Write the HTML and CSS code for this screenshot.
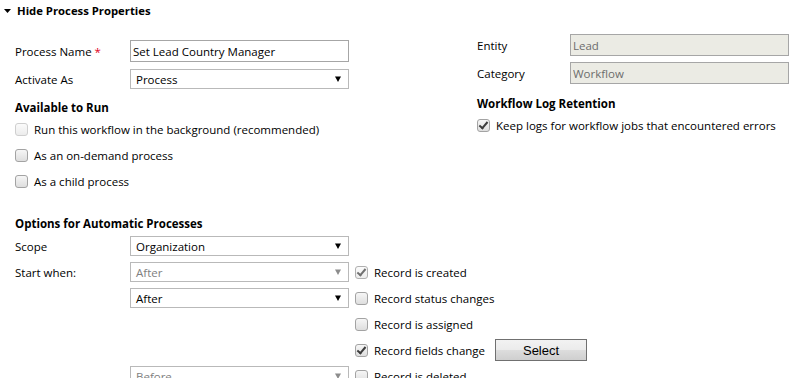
FILE: index.html
```html
<!DOCTYPE html>
<html lang="en">
<head>
    <meta charset="UTF-8">
    <meta name="viewport" content="width=device-width, initial-scale=1.0">
    <title>Process Properties</title>
    <link rel="stylesheet" href="styles.css">
</head>
<body>

    <!-- Section header -->
    <div class="section-header">
        <svg class="toggle" width="7" height="4" viewBox="0 0 7 4"><polygon points="0,0 7,0 3.5,4" fill="#000"/></svg>
        <span>Hide Process Properties</span>
    </div>

    <div class="props">
        <!-- Left column -->
        <div class="col-left">
            <div class="field-row first">
                <label class="field-label">Process Name <span class="req">*</span></label>
                <input type="text" class="text-input" value="Set Lead Country Manager">
            </div>
            <div class="field-row">
                <label class="field-label">Activate As</label>
                <div class="select"><span>Process</span><svg class="arrow" width="6" height="6" viewBox="0 0 6 6"><polygon points="0,0.5 6,0.5 3,6"/></svg></div>
            </div>

            <h3 class="group-title run-title">Available to Run</h3>
            <div class="check-row"><span class="cb disabled"></span>Run this workflow in the background (recommended)</div>
            <div class="check-row"><span class="cb"></span>As an on-demand process</div>
            <div class="check-row"><span class="cb"></span>As a child process</div>

            <h3 class="group-title auto-title">Options for Automatic Processes</h3>
            <div class="auto-grid">
                <div class="field-label">Scope</div>
                <div class="select"><span>Organization</span><svg class="arrow" width="6" height="6" viewBox="0 0 6 6"><polygon points="0,0.5 6,0.5 3,6"/></svg></div>
                <div></div>

                <div class="field-label">Start when:</div>
                <div class="select disabled"><span>After</span><svg class="arrow" width="6" height="6" viewBox="0 0 6 6"><polygon points="0,0.5 6,0.5 3,6"/></svg></div>
                <div class="check-row"><span class="cb checked disabled"></span>Record is created</div>

                <div></div>
                <div class="select"><span>After</span><svg class="arrow" width="6" height="6" viewBox="0 0 6 6"><polygon points="0,0.5 6,0.5 3,6"/></svg></div>
                <div class="check-row"><span class="cb"></span>Record status changes</div>

                <div></div>
                <div></div>
                <div class="check-row"><span class="cb"></span>Record is assigned</div>

                <div></div>
                <div></div>
                <div class="check-row"><span class="cb checked"></span>Record fields change<button class="btn-select">Select</button></div>

                <div></div>
                <div class="select disabled"><span>Before</span><svg class="arrow" width="6" height="6" viewBox="0 0 6 6"><polygon points="0,0.5 6,0.5 3,6"/></svg></div>
                <div class="check-row"><span class="cb"></span>Record is deleted</div>
            </div>
        </div>

        <!-- Right column -->
        <div class="col-right">
            <div class="field-row first">
                <label class="field-label narrow">Entity</label>
                <input type="text" class="text-input readonly" value="Lead" disabled>
            </div>
            <div class="field-row">
                <label class="field-label narrow">Category</label>
                <input type="text" class="text-input readonly" value="Workflow" disabled>
            </div>

            <h3 class="group-title log-title">Workflow Log Retention</h3>
            <div class="check-row"><span class="cb checked"></span>Keep logs for workflow jobs that encountered errors</div>
        </div>
    </div>

</body>
</html>
```

FILE: styles.css
```css
body {
    margin: 0;
    font-family: "Segoe UI", "Open Sans", "Noto Sans", sans-serif;
    font-size: 11.5px;
    color: #000;
    background: #fff;
    overflow: hidden;
}

.section-header {
    display: flex;
    align-items: center;
    height: 20px;
    padding-left: 4px;
    font-weight: bold;
    font-size: 11.3px;
}

.section-header .toggle {
    margin-right: 6px;
    margin-top: 1px;
}

.props {
    display: grid;
    grid-template-columns: 462px 1fr;
    padding-left: 15px;
}

.col-left {
    padding-top: 20px;
    white-space: nowrap;
}

.col-right {
    padding-top: 14px;
    white-space: nowrap;
}

.field-row {
    display: flex;
    align-items: center;
    height: 22px;
    margin-top: 6px;
}

.field-row.first {
    margin-top: 0;
}

.field-label {
    width: 115px;
    flex-shrink: 0;
}

.field-label.narrow {
    width: 93px;
}

.req {
    color: #e0001b;
}

.text-input {
    width: 219px;
    height: 22px;
    box-sizing: border-box;
    border: 1px solid #a6a6a6;
    padding: 0 2px;
    font: inherit;
    color: #000;
    outline: none;
    background: #fff;
}

.text-input.readonly {
    background: #ebebe4;
    color: #6d6d6d;
}

.select {
    display: flex;
    align-items: center;
    justify-content: space-between;
    width: 219px;
    height: 20px;
    box-sizing: border-box;
    border: 1px solid #b9b9b9;
    padding: 0 7px 0 5px;
    background: #fff;
}

.select .arrow {
    fill: #000;
}

.select.disabled {
    color: #808080;
}

.select.disabled .arrow {
    fill: #8c8c8c;
}

.group-title {
    margin: 0;
    font-size: 11.5px;
    font-weight: bold;
    height: 16px;
    line-height: 16px;
}

.run-title {
    margin-top: 10px;
}

.auto-title {
    margin-top: 22px;
}

.log-title {
    margin-top: 12px;
}

.check-row {
    display: flex;
    align-items: center;
    height: 26px;
}

.col-left > .check-row:first-of-type {
    height: 27px;
}

.cb {
    position: relative;
    width: 13px;
    height: 13px;
    box-sizing: border-box;
    border: 1px solid #a3a3a3;
    border-radius: 3px;
    background: linear-gradient(#f6f6f6, #dedede);
    margin-right: 6px;
    flex-shrink: 0;
}

.cb.disabled {
    border-color: #cfcfcf;
    background: linear-gradient(#fbfbfb, #ececec);
}

.cb.checked::after {
    content: "";
    position: absolute;
    left: 3px;
    top: 0px;
    width: 3px;
    height: 7px;
    border: solid #3c3c3c;
    border-width: 0 2px 2px 0;
    transform: rotate(40deg);
}

.cb.checked.disabled {
    border-color: #b0b0b0;
}

.cb.checked.disabled::after {
    border-color: #707070;
}

.auto-grid {
    display: grid;
    grid-template-columns: 115px 219px max-content;
    grid-auto-rows: 26px;
    align-items: center;
    margin-top: 1px;
}

.auto-grid .check-row {
    padding-left: 6px;
}

.btn-select {
    display: block;
    width: 92px;
    height: 22px;
    margin-left: 10px;
    border: 1px solid #707070;
    border-radius: 0;
    background: linear-gradient(#f2f2f2 0%, #ebebeb 50%, #dddddd 51%, #cfcfcf 100%);
    font-family: "Liberation Sans", Arial, sans-serif;
    font-size: 13px;
    color: #000;
    padding: 0;
}
```
